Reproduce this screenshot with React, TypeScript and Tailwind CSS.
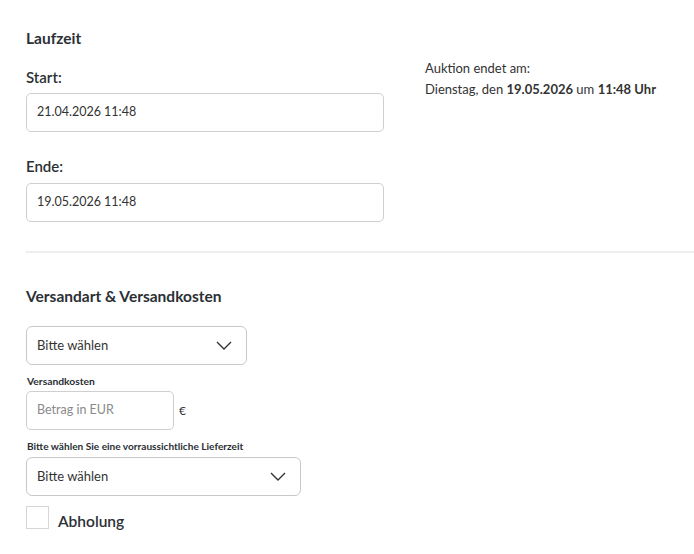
import React from "react";

const font = { fontFamily: "Lato, 'Open Sans', sans-serif" };

const Chevron = () => (
  <svg width="16" height="9" viewBox="0 0 16 9" fill="none" className="shrink-0">
    <path d="M1 1l7 7 7-7" stroke="#333" strokeWidth="1.4" />
  </svg>
);

const TextInput: React.FC<{ value?: string; placeholder?: string; className?: string }> = ({
  value,
  placeholder,
  className = "",
}) => (
  <div
    className={`h-[39px] flex items-center px-[10px] border border-[#cfcfcf] rounded-[5px] bg-white ${className}`}
  >
    {value ? (
      <span className="text-[#333] text-[12.5px]">{value}</span>
    ) : (
      <span className="text-[#8a8a8a] text-[12.5px]">{placeholder}</span>
    )}
  </div>
);

const SelectBox: React.FC<{ className?: string }> = ({ className = "" }) => (
  <div
    className={`h-[39px] flex items-center justify-between pl-[10px] pr-[14px] border border-[#c8c8c8] rounded-[6px] bg-white text-[13px] text-[#333] ${className}`}
  >
    <span>Bitte wählen</span>
    <Chevron />
  </div>
);

export default function App() {
  return (
    <div className="w-[694px] h-[554px] bg-white overflow-hidden text-[#2b3035]" style={font}>
      <div className="pl-[26px] pt-[29px]">
        <div className="flex">
          <div className="w-[358px]">
            <h2 className="text-[15.5px] font-bold leading-[18px]">Laufzeit</h2>
            <div className="mt-[21px] text-[15px] font-semibold leading-[18px]">Start:</div>
            <TextInput value="21.04.2026 11:48" className="mt-[7px]" />
            <div className="mt-[25px] text-[15px] font-semibold leading-[18px]">Ende:</div>
            <TextInput value="19.05.2026 11:48" className="mt-[8px]" />
          </div>
          <div className="ml-[41px] pt-[29px] text-[13px] leading-[21px] text-[#333]">
            <div>Auktion endet am:</div>
            <div>
              Dienstag, den <b>19.05.2026</b> um <b>11:48 Uhr</b>
            </div>
          </div>
        </div>

        <div className="mt-[29px] h-[2px] bg-[#eeeeee]" />

        <h2 className="mt-[34px] text-[15.5px] font-bold leading-[18px]">Versandart &amp; Versandkosten</h2>
        <SelectBox className="mt-[21px] w-[221px]" />

        <div className="mt-[10px] pl-[1px] text-[10.3px] font-bold leading-[12px]">Versandkosten</div>
        <div className="mt-[4px] flex items-center">
          <TextInput placeholder="Betrag in EUR" className="w-[148px]" />
          <span className="ml-[5px] text-[12px] text-[#333]">€</span>
        </div>

        <div className="mt-[10px] pl-[1px] text-[10.1px] font-bold leading-[12px]">
          Bitte wählen Sie eine vorraussichtliche Lieferzeit
        </div>
        <SelectBox className="mt-[5px] w-[275px]" />

        <label className="mt-[10px] flex items-start">
          <span className="w-[23px] h-[23px] border border-[#d6d6d6] bg-white" />
          <span className="ml-[9px] mt-[5px] text-[15.5px] font-semibold leading-[20px]">Abholung</span>
        </label>
      </div>
    </div>
  );
}
